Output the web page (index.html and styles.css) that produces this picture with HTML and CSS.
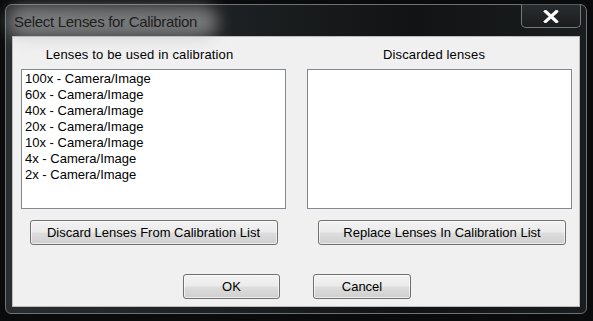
FILE: index.html
```html
<!DOCTYPE html>
<html>
<head>
<meta charset="utf-8">
<link rel="stylesheet" href="styles.css">
</head>
<body>
<div class="screen">
  <div class="window">
    <div class="titlebar">
      <div class="title">Select Lenses for Calibration</div>
      <div class="close">
        <svg width="16" height="13" viewBox="0 0 16 13"><path d="M2.5 1.5 L13.5 11.5 M13.5 1.5 L2.5 11.5" stroke="#fff" stroke-width="3.2" stroke-linecap="square"/></svg>
      </div>
    </div>
    <div class="client">
      <div class="columns">
        <div class="col">
          <div class="label left">Lenses to be used in calibration</div>
          <div class="listbox">
            <div class="item">100x - Camera/Image</div>
            <div class="item">60x - Camera/Image</div>
            <div class="item">40x - Camera/Image</div>
            <div class="item">20x - Camera/Image</div>
            <div class="item">10x - Camera/Image</div>
            <div class="item">4x - Camera/Image</div>
            <div class="item">2x - Camera/Image</div>
          </div>
          <button class="btn wide">Discard Lenses From Calibration List</button>
        </div>
        <div class="col">
          <div class="label right">Discarded lenses</div>
          <div class="listbox"></div>
          <button class="btn wide right">Replace Lenses In Calibration List</button>
        </div>
      </div>
      <div class="actions">
        <button class="btn small">OK</button>
        <button class="btn small">Cancel</button>
      </div>
    </div>
  </div>
</div>
</body>
</html>
```

FILE: styles.css
```css
* { box-sizing: border-box; }
html, body { margin: 0; padding: 0; background: #0a0b0c; }
.screen {
  width: 593px; height: 321px;
  padding: 4px 0 0 5px;
  background: #0a0b0c;
  font-family: "Liberation Sans", Arial, sans-serif;
}
.window {
  width: 582px; height: 310px;
  border: 1px solid #6e7274;
  border-radius: 7px 7px 6px 6px;
  background: linear-gradient(90deg, #2a2d2f 0%, #1d2022 40%, #111314 70%, #1a1d1f 100%);
  padding: 0 6px 6px 6px;
  display: flex; flex-direction: column;
}
.titlebar {
  height: 31px;
  display: flex; align-items: flex-start;
  position: relative;
  margin-right: -1px;
}
.titlebar::before {
  content: "";
  position: absolute;
  left: -4px; top: 1px; width: 210px; height: 32px;
  background: rgba(190, 190, 190, 0.55);
  filter: blur(8px);
  border-radius: 16px;
}
.title {
  position: relative;
  font-size: 15px;
  letter-spacing: -0.3px;
  color: #1e1e1e;
  padding: 8px 0 0 2px;
  line-height: 18px;
}
.close {
  margin-left: auto;
  margin-top: -1px;
  width: 60px; height: 24px;
  border: 1px solid #74797b;
  border-top-color: #55595b;
  border-radius: 0 0 5px 5px;
  background: linear-gradient(#2a2d2f, #1a1c1e);
  display: flex; align-items: center; justify-content: center;
  padding-top: 1px;
}
.client {
  flex: 1;
  background: #f0f0f0;
  border: 1px solid #b9bdc0;
  display: flex; flex-direction: column;
  padding: 10px 7px 0 8px;
  font-size: 13px;
  color: #000;
}
.columns {
  display: grid;
  grid-template-columns: 265px 265px;
  column-gap: 21px;
}
.col { display: flex; flex-direction: column; }
.label {
  text-align: center;
  height: 16px; line-height: 16px;
  letter-spacing: 0.15px;
}
.label.left { margin-right: 28px; }
.label.right { margin-right: 11px; }
.listbox {
  margin-top: 6px;
  height: 140px;
  background: #fff;
  border: 1px solid #828790;
  padding: 1px 3px;
}
.item { line-height: 16px; height: 16px; }
.btn {
  font-family: "Liberation Sans", Arial, sans-serif;
  font-size: 13px;
  color: #000;
  height: 25px;
  border: 1px solid #707070;
  border-radius: 3px;
  background: linear-gradient(#f2f2f2 0%, #ebebeb 48%, #dddddd 52%, #cfcfcf 100%);
  box-shadow: inset 0 0 0 1px rgba(255,255,255,0.6);
  padding: 0;
  line-height: 22px;
}
.wide { width: 248px; margin-top: 11px; align-self: center; }
.wide.right { align-self: flex-start; margin-left: 11px; }
.actions {
  display: flex; justify-content: center; gap: 33px;
  margin-top: 29px;
  padding-left: 1px;
}
.small { width: 97px; }
.small + .small { width: 98px; }
```
